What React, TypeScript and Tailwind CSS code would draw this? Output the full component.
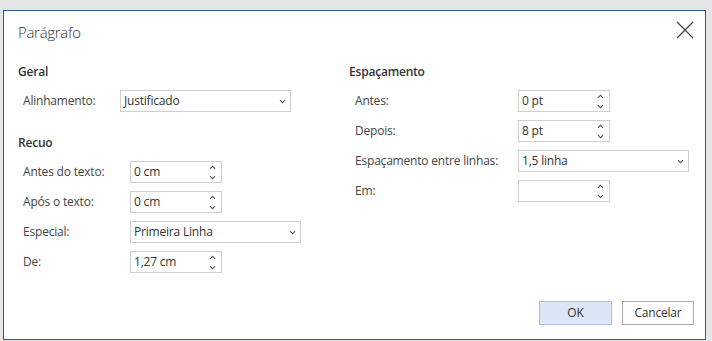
const font = { fontFamily: '"Open Sans", "Noto Sans", sans-serif' };

const ChevronDown = () => (
  <svg width="7" height="5" viewBox="0 0 7 5" className="text-[#555]">
    <path d="M1 1.2 L3.5 3.7 L6 1.2" fill="none" stroke="currentColor" strokeWidth="1.1" />
  </svg>
);

const ChevronUp = () => (
  <svg width="7" height="5" viewBox="0 0 7 5" className="text-[#555]">
    <path d="M1 3.8 L3.5 1.3 L6 3.8" fill="none" stroke="currentColor" strokeWidth="1.1" />
  </svg>
);

const Spinner = ({ value }: { value: string }) => (
  <div className="flex h-[22px] w-[92px] items-center justify-between border border-[#cfcfcf] bg-white pl-[3px] pr-[5px]">
    <span className="text-[12px] leading-none tracking-[-0.2px] text-[#333]">{value}</span>
    <div className="flex flex-col items-center gap-[5px]">
      <ChevronUp />
      <ChevronDown />
    </div>
  </div>
);

const Select = ({ value }: { value: string }) => (
  <div className="flex h-[22px] w-[171px] items-center justify-between border border-[#cfcfcf] bg-white pl-[3px] pr-[4px]">
    <span className="text-[12px] leading-none tracking-[-0.2px] text-[#333]">{value}</span>
    <ChevronDown />
  </div>
);

const Row = ({
  label,
  labelWidth,
  children,
}: {
  label: string;
  labelWidth: string;
  children: React.ReactNode;
}) => (
  <div className="flex h-[22px] items-center">
    <span className={`${labelWidth} text-[12px] tracking-[-0.2px] text-[#444]`}>{label}</span>
    {children}
  </div>
);

const Heading = ({ children, className = "" }: { children: React.ReactNode; className?: string }) => (
  <div className={`h-[18px] text-[12px] leading-[18px] font-semibold tracking-[-0.2px] text-[#333] ${className}`}>
    {children}
  </div>
);

export default function App() {
  return (
    <div className="h-[341px] w-[712px] overflow-hidden bg-[#e6e6e6] pl-[3px] pt-[10px]" style={font}>
      <div className="flex h-[330px] w-[703px] flex-col border border-[#2b579a] bg-white">
        {/* Header */}
        <div className="flex h-[52px] items-start justify-between pl-[14px] pr-[11px] pt-[10px]">
          <h2 className="text-[15px] leading-[22px] font-light tracking-[-0.3px] text-[#333]">Parágrafo</h2>
          <svg width="18" height="18" viewBox="0 0 18 18" className="text-[#444]">
            <path d="M1 1 L17 17 M17 1 L1 17" stroke="currentColor" strokeWidth="1.2" />
          </svg>
        </div>

        {/* Body */}
        <div className="flex pl-[14px]">
          {/* Left column */}
          <div className="w-[331px]">
            <Heading>Geral</Heading>
            <div className="mt-[9px] pl-[5px]">
              <Row label="Alinhamento:" labelWidth="w-[97px]">
                <Select value="Justificado" />
              </Row>
            </div>
            <Heading className="mt-[22px]">Recuo</Heading>
            <div className="mt-[9px] flex flex-col gap-[8px] pl-[5px]">
              <Row label="Antes do texto:" labelWidth="w-[107px]">
                <Spinner value="0 cm" />
              </Row>
              <Row label="Após o texto:" labelWidth="w-[107px]">
                <Spinner value="0 cm" />
              </Row>
              <Row label="Especial:" labelWidth="w-[107px]">
                <Select value="Primeira Linha" />
              </Row>
              <Row label="De:" labelWidth="w-[107px]">
                <Spinner value="1,27 cm" />
              </Row>
            </div>
          </div>

          {/* Right column */}
          <div>
            <Heading>Espaçamento</Heading>
            <div className="mt-[9px] flex flex-col gap-[8px] pl-[6px]">
              <Row label="Antes:" labelWidth="w-[163px]">
                <Spinner value="0 pt" />
              </Row>
              <Row label="Depois:" labelWidth="w-[163px]">
                <Spinner value="8 pt" />
              </Row>
              <Row label="Espaçamento entre linhas:" labelWidth="w-[163px]">
                <Select value="1,5 linha" />
              </Row>
              <Row label="Em:" labelWidth="w-[163px]">
                <Spinner value="" />
              </Row>
            </div>
          </div>
        </div>

        {/* Footer */}
        <div className="mt-auto flex justify-end gap-[10px] pb-[14px] pr-[11px]">
          <button className="h-[24px] w-[73px] border border-[#a9bfe3] bg-[#dce6f6] text-[12px] tracking-[-0.2px] text-[#333]">
            OK
          </button>
          <button className="h-[24px] w-[72px] border border-[#ababab] bg-white text-[12px] tracking-[-0.2px] text-[#333]">
            Cancelar
          </button>
        </div>
      </div>
    </div>
  );
}
